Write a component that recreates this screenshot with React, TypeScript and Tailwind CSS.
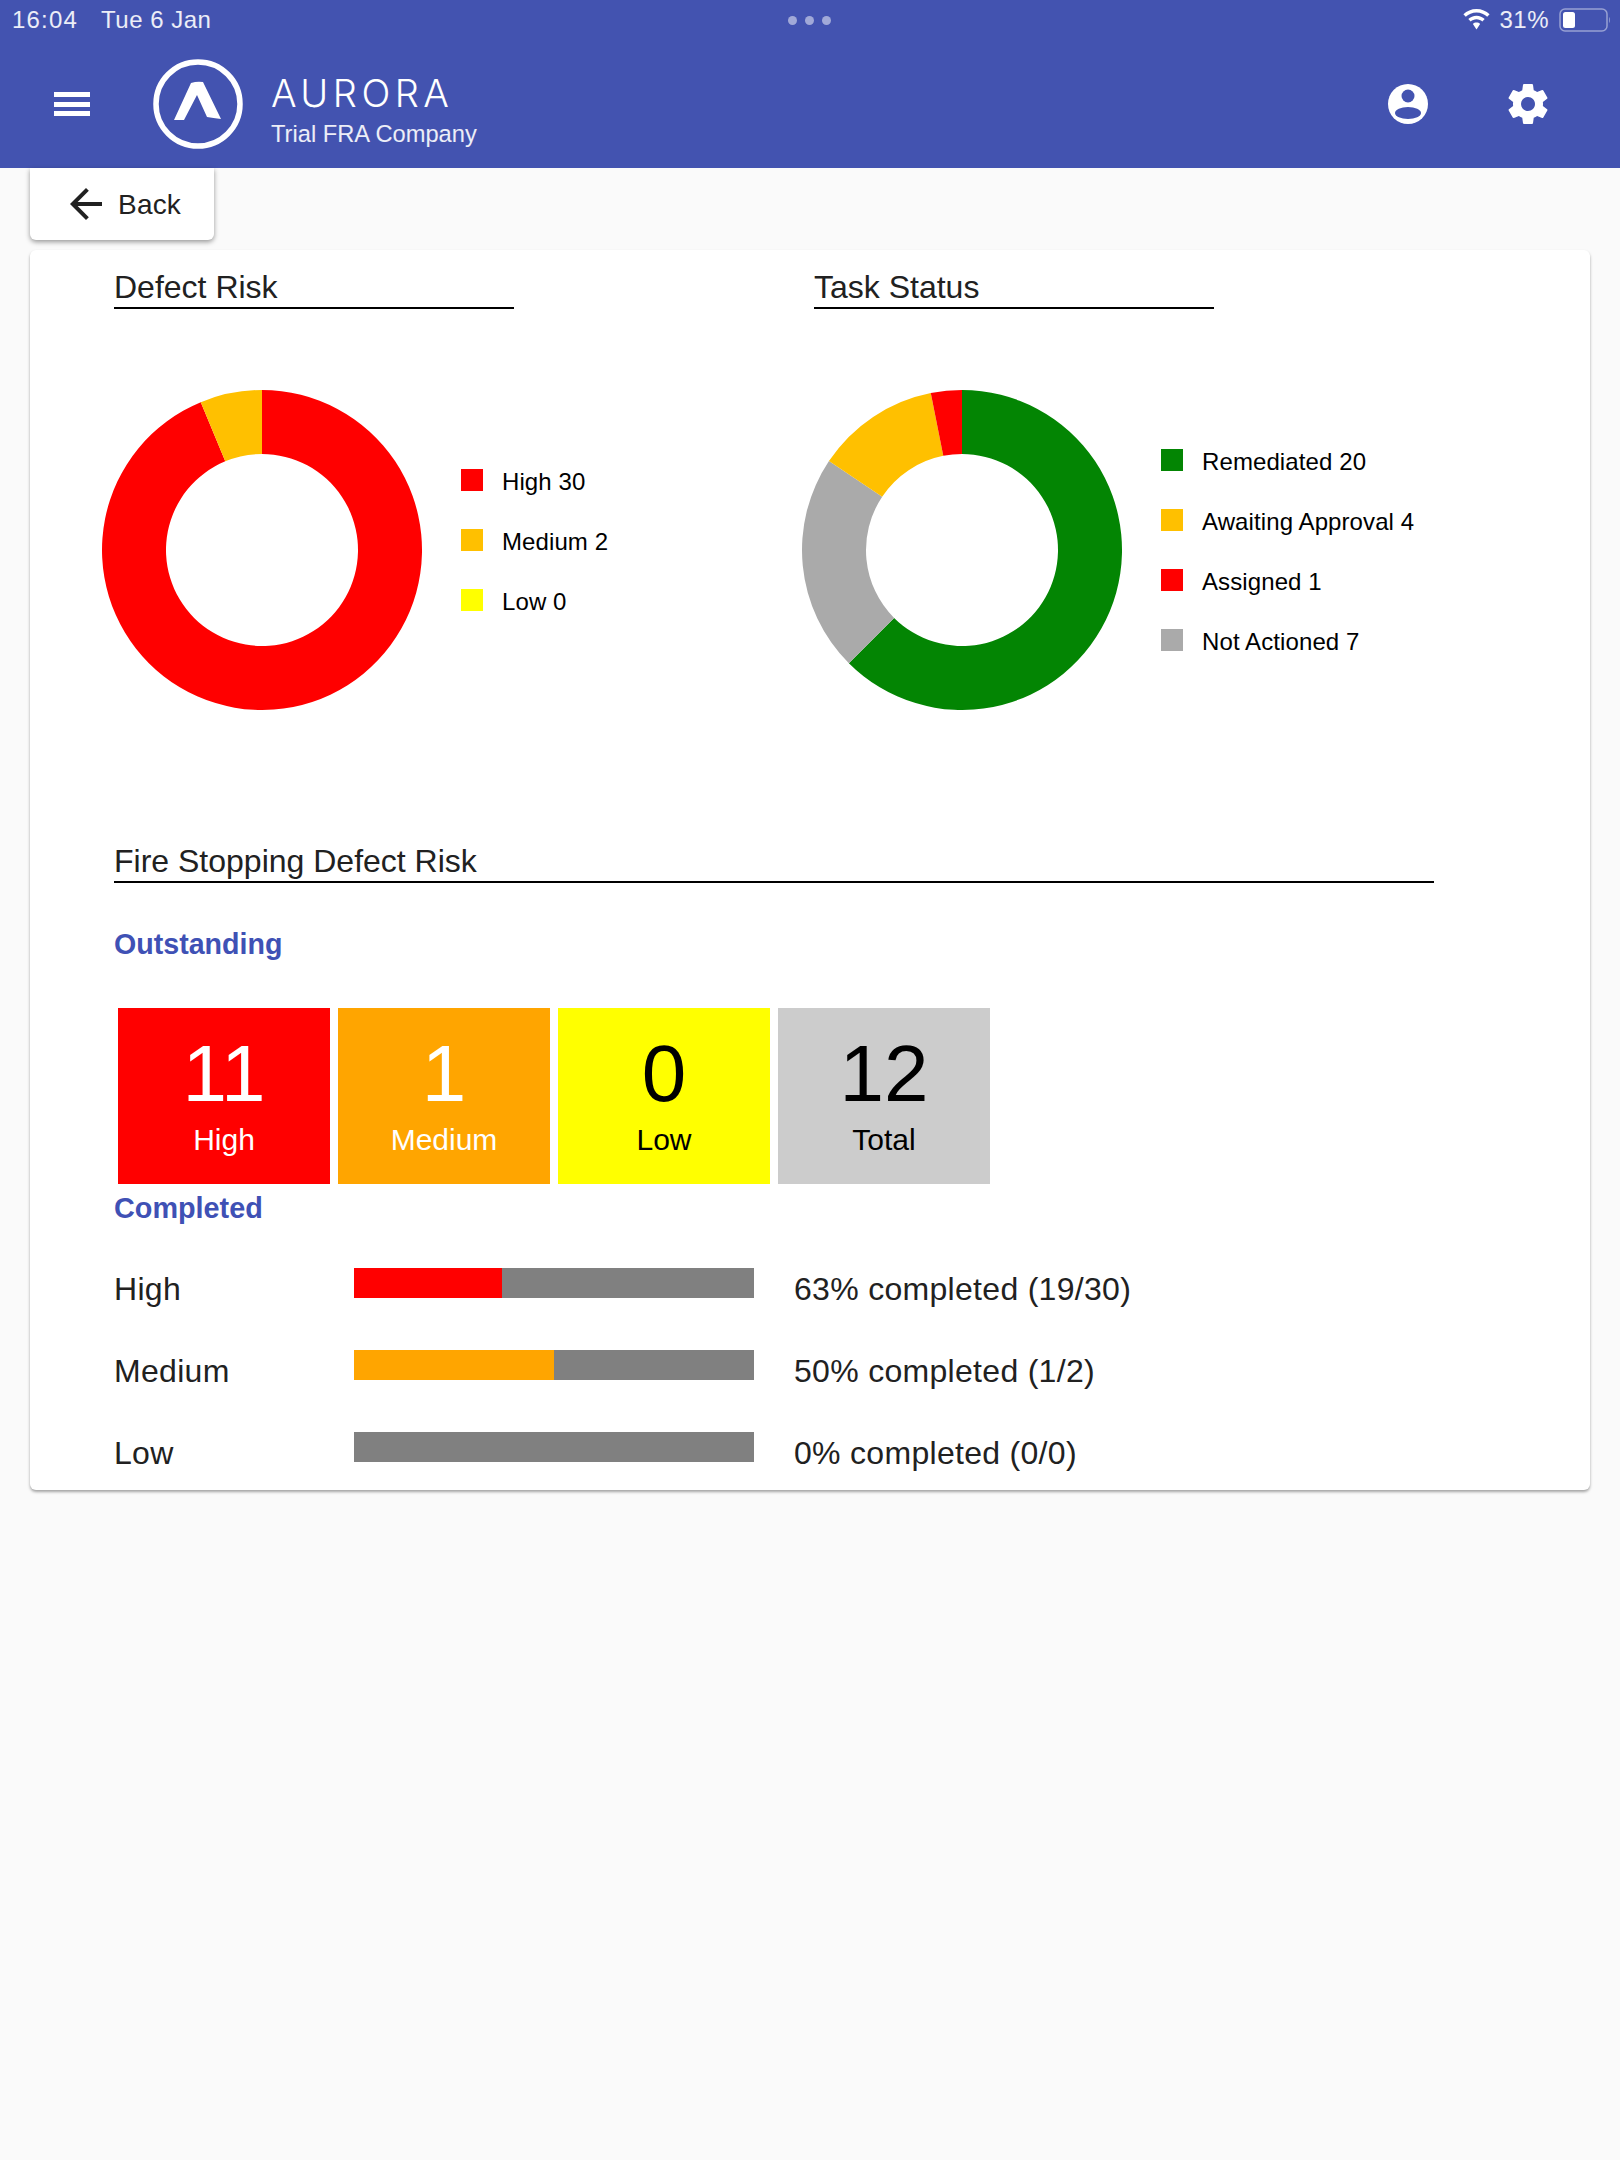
import React from "react";

const FONT = "font-['Liberation_Sans',Arial,sans-serif]";

interface Slice {
  label: string;
  value: number;
  color: string;
  swatch: string;
}

const polar = (cx: number, cy: number, r: number, deg: number) => {
  const a = ((deg - 90) * Math.PI) / 180;
  return [cx + r * Math.cos(a), cy + r * Math.sin(a)];
};

const arcPath = (start: number, end: number) => {
  const [x1, y1] = polar(160, 160, 160, start);
  const [x2, y2] = polar(160, 160, 160, end);
  const [x3, y3] = polar(160, 160, 96, end);
  const [x4, y4] = polar(160, 160, 96, start);
  const large = end - start > 180 ? 1 : 0;
  return `M${x1} ${y1}A160 160 0 ${large} 1 ${x2} ${y2}L${x3} ${y3}A96 96 0 ${large} 0 ${x4} ${y4}Z`;
};

const Donut = ({ slices }: { slices: Slice[] }) => {
  const total = slices.reduce((acc, s) => acc + s.value, 0);
  let angle = 0;
  return (
    <svg width="320" height="320" viewBox="0 0 320 320" className="shrink-0">
      {slices
        .filter((s) => s.value > 0)
        .map((s) => {
          const start = angle;
          angle += (s.value / total) * 360;
          return <path key={s.label} d={arcPath(start, angle)} fill={s.color} />;
        })}
    </svg>
  );
};

const Legend = ({ items, className }: { items: Slice[]; className: string }) => (
  <div className={`flex flex-col gap-[38px] ${className}`}>
    {items.map((item) => (
      <div key={item.label} className="flex h-[22px] items-center gap-[19px]">
        <span className="h-[22px] w-[22px] shrink-0" style={{ backgroundColor: item.swatch }} />
        <span className="pt-[3px] text-[24px] leading-[22px] tracking-[0.1px] whitespace-nowrap text-black">
          {item.label} {item.value}
        </span>
      </div>
    ))}
  </div>
);

const SectionTitle = ({ children, className }: { children: string; className: string }) => (
  <div className={`h-[41px] border-b-2 border-black text-[32px] leading-[39px] text-[#212121] ${className}`}>
    {children}
  </div>
);

const Tile = ({
  value,
  label,
  className,
}: {
  value: number;
  label: string;
  className: string;
}) => (
  <div className={`flex h-[176px] w-[212px] flex-col items-center ${className}`}>
    <div className="mt-[20px] text-[80px] leading-[92px]">{value}</div>
    <div className="mt-[2px] text-[30px] leading-[36px]">{label}</div>
  </div>
);

const ProgressRow = ({
  label,
  percent,
  text,
  fill,
  className,
}: {
  label: string;
  percent: number;
  text: string;
  fill: string;
  className: string;
}) => (
  <div className={`flex items-start text-[32px] leading-[40px] tracking-[0.3px] text-[#212121] ${className}`}>
    <div className="w-[240px] pt-px">{label}</div>
    <div className="h-[30px] w-[400px] bg-[#808080]">
      <div className="h-full" style={{ width: `${percent}%`, backgroundColor: fill }} />
    </div>
    <div className="ml-[40px] pt-px">{text}</div>
  </div>
);

const defectRisk: Slice[] = [
  { label: "High", value: 30, color: "#ff0000", swatch: "#ff0000" },
  { label: "Medium", value: 2, color: "#ffc000", swatch: "#ffc000" },
  { label: "Low", value: 0, color: "#ffff00", swatch: "#ffff00" },
];

const taskDonut: Slice[] = [
  { label: "Remediated", value: 20, color: "#038503", swatch: "#038503" },
  { label: "Not Actioned", value: 7, color: "#aaaaaa", swatch: "#aaaaaa" },
  { label: "Awaiting Approval", value: 4, color: "#ffc000", swatch: "#ffc000" },
  { label: "Assigned", value: 1, color: "#ff0000", swatch: "#ff0000" },
];

const taskLegend = [taskDonut[0], taskDonut[2], taskDonut[3], taskDonut[1]];

const StatusBar = () => (
  <div className="relative flex h-[40px] items-start justify-between pl-[12px] pr-[9px] pt-[5px] text-[24px] leading-[30px] text-white/90">
    <div className="flex gap-[23px]">
      <span className="tracking-[1.200px]">16:04</span>
      <span className="tracking-[0.500px]">Tue 6 Jan</span>
    </div>
    <div className="absolute left-[788px] top-[16px] flex gap-[8px]">
      <span className="h-[9px] w-[9px] rounded-full bg-white/50" />
      <span className="h-[9px] w-[9px] rounded-full bg-white/50" />
      <span className="h-[9px] w-[9px] rounded-full bg-white/50" />
    </div>
    <div className="flex items-center gap-[9px]">
      <svg width="27" height="21" viewBox="0 0 27 21" className="mb-[2px]">
        <path d="M13.5 0C8.4 0 3.800 2 .4 5.300l2.400 2.500C5.600 5.100 9.300 3.500 13.500 3.500s7.900 1.600 10.700 4.300l2.400-2.500C23.200 2 18.600 0 13.500 0z" fill="white" />
        <path d="M13.500 6.800c-3.200 0-6.100 1.300-8.200 3.300l2.400 2.500c1.500-1.400 3.500-2.300 5.800-2.300s4.300.9 5.800 2.300l2.400-2.500c-2.100-2-5-3.300-8.200-3.300z" fill="white" />
        <path d="M13.500 13.600c-1.400 0-2.700.5-3.600 1.400l3.600 5.400 3.600-5.400c-.9-.9-2.200-1.400-3.600-1.400z" fill="white" />
      </svg>
      <span className="tracking-[0.5px]">31%</span>
      <svg width="52" height="24" viewBox="0 0 52 24" className="ml-[1px]">
        <rect x="1" y="1" width="47" height="22" rx="5" fill="none" stroke="white" strokeOpacity="0.45" strokeWidth="1.500" />
        <rect x="4" y="4" width="12" height="16" rx="2.500" fill="white" />
        <path d="M50 9c1 .5 1 5.500 0 6z" fill="white" fillOpacity="0.5" />
      </svg>
    </div>
  </div>
);

const NavBar = () => (
  <div className="flex h-[128px] items-center">
    <div className="ml-[54px] flex h-[24px] w-[36px] flex-col justify-between">
      <span className="h-[5px] bg-white" />
      <span className="h-[5px] bg-white" />
      <span className="h-[5px] bg-white" />
    </div>
    <svg width="90" height="90" viewBox="0 0 90 90" className="ml-[63px] shrink-0">
      <circle cx="45" cy="45" r="42" fill="none" stroke="white" strokeWidth="5.500" />
      <path d="M21 61L38 24Q44 22 50 23L68 60Q60 59 54 58L44 36L31 61z" fill="white" />
    </svg>
    <div className="ml-[28px] flex flex-col pt-[11px] text-white">
      <span className="font-['Inter',sans-serif] text-[38px] leading-[44px] font-light tracking-[4.500px]">AURORA</span>
      <span className="mt-[4px] text-[23.7px] leading-[30px] text-white/90">Trial FRA Company</span>
    </div>
    <svg width="40" height="40" viewBox="0 0 40 40" className="ml-auto shrink-0">
      <circle cx="20" cy="20" r="20" fill="white" />
      <circle cx="20" cy="12" r="6.500" fill="#4353b0" />
      <ellipse cx="20" cy="29" rx="13" ry="6" fill="#4353b0" />
    </svg>
    <svg width="48" height="48" viewBox="0 0 24 24" className="ml-[76px] mr-[68px] shrink-0">
      <path
        fill="white"
        d="M19.43 12.98c.04-.32.07-.64.07-.98s-.03-.66-.07-.98l2.110-1.650c.19-.15.24-.42.12-.64l-2-3.460c-.12-.22-.39-.3-.61-.22l-2.490 1c-.52-.4-1.080-.73-1.690-.98l-.38-2.650C14.460 2.180 14.250 2 14 2h-4c-.25 0-.46.18-.49.42l-.38 2.650c-.61.25-1.170.59-1.690.98l-2.490-1c-.23-.09-.49 0-.61.22l-2 3.460c-.13.22-.07.49.12.64l2.110 1.650c-.04.32-.07.65-.07.98s.03.66.07.98l-2.110 1.650c-.19.15-.24.42-.12.64l2 3.460c.12.22.39.3.61.22l2.490-1c.52.4 1.080.73 1.690.98l.38 2.650c.03.24.24.42.49.42h4c.25 0 .46-.18.49-.42l.38-2.650c.61-.25 1.170-.59 1.690-.98l2.490 1c.23.09.49 0 .61-.22l2-3.460c.12-.22.07-.49-.12-.64l-2.110-1.650zM12 15.500c-1.930 0-3.500-1.570-3.500-3.500s1.570-3.500 3.500-3.500 3.500 1.570 3.500 3.500-1.570 3.500-3.500 3.500z"
      />
    </svg>
  </div>
);

export default function App() {
  return (
    <div className={`flex min-h-[2160px] flex-col bg-[#fafafa] ${FONT}`}>
      <header className="bg-[#4353b0]">
        <StatusBar />
        <NavBar />
      </header>

      <div className="ml-[30px] flex h-[72px] w-[184px] items-center rounded-b-[6px] bg-white pl-[32px] shadow-[0_2px_5px_rgba(0,0,0,0.4)]">
        <svg width="48" height="48" viewBox="0 0 24 24" className="shrink-0">
          <path fill="#212121" d="M20 11H7.830l5.590-5.590L12 4l-8 8 8 8 1.410-1.410L7.830 13H20v-2z" />
        </svg>
        <span className="ml-[8px] pt-px text-[28px] tracking-[0.2px] text-[#212121]">Back</span>
      </div>

      {/* Main card */}
      <main className="mx-[30px] mt-[10px] h-[1240px] overflow-hidden rounded-[6px] bg-white pl-[84px] pt-[18px] shadow-[0_2px_3px_rgba(0,0,0,0.35)]">
        <div className="flex">
          <section className="w-[700px]">
            <SectionTitle className="w-[400px]">Defect Risk</SectionTitle>
            <div className="ml-[-12px] mt-[81px] flex gap-[39px]">
              <Donut slices={defectRisk} />
              <Legend items={defectRisk} className="mt-[79px]" />
            </div>
          </section>
          <section>
            <SectionTitle className="w-[400px]">Task Status</SectionTitle>
            <div className="ml-[-12px] mt-[81px] flex gap-[39px]">
              <Donut slices={taskDonut} />
              <Legend items={taskLegend} className="mt-[59px]" />
            </div>
          </section>
        </div>

        <SectionTitle className="mt-[132px] w-[1320px]">Fire Stopping Defect Risk</SectionTitle>
        <h3 className="mt-[41px] text-[28.6px] leading-[40px] font-bold text-[#3f51b5]">Outstanding</h3>

        <div className="ml-[4px] mt-[44px] flex gap-[8px]">
          <Tile value={11} label="High" className="bg-[#ff0000] text-white" />
          <Tile value={1} label="Medium" className="bg-[#ffa500] text-white" />
          <Tile value={0} label="Low" className="bg-[#ffff00] text-black" />
          <Tile value={12} label="Total" className="bg-[#cccccc] text-black" />
        </div>

        <h3 className="mt-[4px] text-[28.8px] leading-[40px] font-bold text-[#3f51b5]">Completed</h3>

        <div className="mt-[40px]">
          <ProgressRow label="High" percent={37} fill="#ff0000" text="63% completed (19/30)" className="h-[82px]" />
          <ProgressRow label="Medium" percent={50} fill="#ffa500" text="50% completed (1/2)" className="h-[82px]" />
          <ProgressRow label="Low" percent={0} fill="#ffa500" text="0% completed (0/0)" className="h-[57px]" />
        </div>
      </main>
    </div>
  );
}
